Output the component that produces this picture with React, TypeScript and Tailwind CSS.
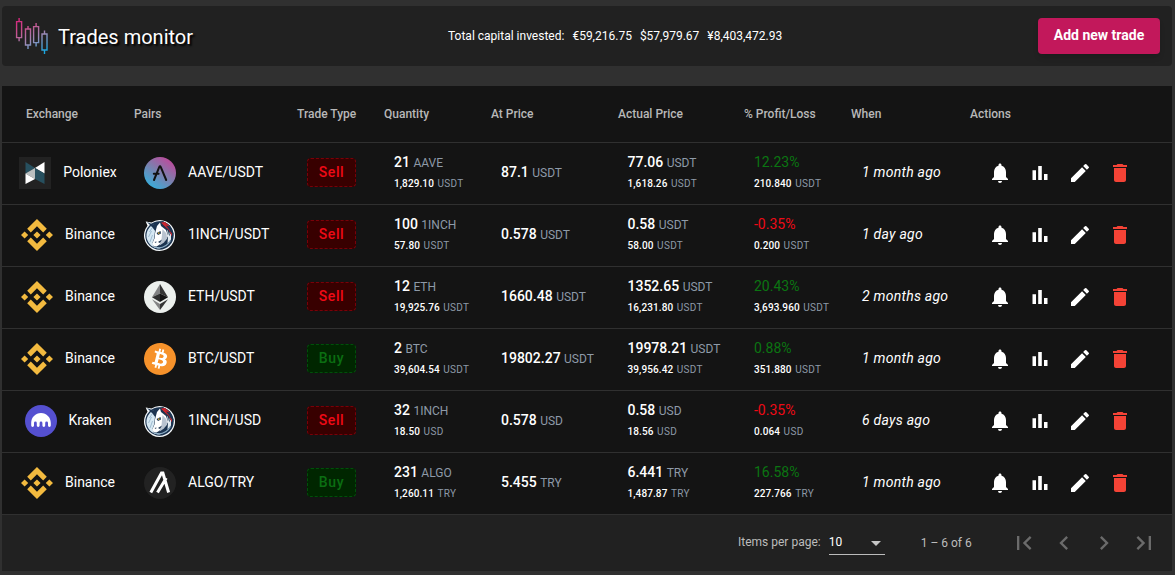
import React from "react";
import { MdNotifications, MdEdit, MdDelete, MdFirstPage, MdLastPage, MdChevronLeft, MdChevronRight } from "react-icons/md";
import { SiBinance, SiBitcoin } from "react-icons/si";

type Exchange = "Poloniex" | "Binance" | "Kraken";
type Coin = "AAVE" | "1INCH" | "ETH" | "BTC" | "ALGO";

interface Trade {
  exchange: Exchange;
  coin: Coin;
  quote: string;
  type: "Sell" | "Buy";
  qty: string;
  total: string;
  at: string;
  actual: string;
  actualTotal: string;
  pct: string;
  profit: string;
  when: string;
}

const trades: Trade[] = [
  { exchange: "Poloniex", coin: "AAVE", quote: "USDT", type: "Sell", qty: "21", total: "1,829.10", at: "87.1", actual: "77.06", actualTotal: "1,618.26", pct: "12.23%", profit: "210.840", when: "1 month ago" },
  { exchange: "Binance", coin: "1INCH", quote: "USDT", type: "Sell", qty: "100", total: "57.80", at: "0.578", actual: "0.58", actualTotal: "58.00", pct: "-0.35%", profit: "0.200", when: "1 day ago" },
  { exchange: "Binance", coin: "ETH", quote: "USDT", type: "Sell", qty: "12", total: "19,925.76", at: "1660.48", actual: "1352.65", actualTotal: "16,231.80", pct: "20.43%", profit: "3,693.960", when: "2 months ago" },
  { exchange: "Binance", coin: "BTC", quote: "USDT", type: "Buy", qty: "2", total: "39,604.54", at: "19802.27", actual: "19978.21", actualTotal: "39,956.42", pct: "0.88%", profit: "351.880", when: "1 month ago" },
  { exchange: "Kraken", coin: "1INCH", quote: "USD", type: "Sell", qty: "32", total: "18.50", at: "0.578", actual: "0.58", actualTotal: "18.56", pct: "-0.35%", profit: "0.064", when: "6 days ago" },
  { exchange: "Binance", coin: "ALGO", quote: "TRY", type: "Buy", qty: "231", total: "1,260.11", at: "5.455", actual: "6.441", actualTotal: "1,487.87", pct: "16.58%", profit: "227.766", when: "1 month ago" },
];

function CandlesLogo() {
  return (
    <svg width="34" height="38" viewBox="0 0 34 38" fill="none" stroke="url(#candles)" strokeWidth="1.4">
      <defs>
        <linearGradient id="candles" gradientUnits="userSpaceOnUse" x1="4" y1="2" x2="24" y2="38">
          <stop offset="0" stopColor="#d7267e" />
          <stop offset="0.3" stopColor="#c4558f" />
          <stop offset="0.62" stopColor="#9a8db8" />
          <stop offset="1" stopColor="#1aa7e0" />
        </linearGradient>
      </defs>
      <path d="M1.600 4.600h5v16h-5zM10.500 12h5v16h-5zM18.600 9.600h5v16h-5zM27 17h5v16h-5z" />
      <path d="M4.100 1v3.600M4.100 20.600v3.600M13 9v3M13 28v4M21.100 6v3.600M21.100 25.600v4M29.500 13.500v3.500M29.500 33v4" />
    </svg>
  );
}

function PoloniexLogo() {
  return (
    <svg width="32" height="32" viewBox="0 0 32 32">
      <path fill="#222222" d="M0 0h32v32H0z" />
      <path fill="#27505f" d="M6.500 5 16 11 6.500 16.500z" />
      <path fill="#fff" d="M25.500 5 16 11l9.500 5.500z" />
      <path fill="#b9bfc0" d="M16 11v11l-9.500-5.500z" />
      <path fill="#27505f" d="M16 11 25.500 16.500V27L16 22z" />
      <path fill="#fff" d="M6.500 16.500 16 22l-9.500 5z" />
    </svg>
  );
}

function KrakenLogo() {
  return (
    <svg width="32" height="32" viewBox="0 0 32 32">
      <circle cx="16" cy="16" r="16" fill="#5550d0" />
      <path fill="#fff" d="M16 8c-5.500 0-9.800 4.400-9.800 9.900v2.700a1.400 1.400 0 0 0 2.800 0v-2.700a1.400 1.400 0 0 1 2.800 0v2.700a1.400 1.400 0 0 0 2.800 0v-2.700a1.400 1.400 0 0 1 2.800 0v2.700a1.400 1.400 0 0 0 2.800 0v-2.700a1.400 1.400 0 0 1 2.800 0v2.700a1.400 1.400 0 0 0 2.800 0v-2.700C25.800 12.400 21.500 8 16 8z" />
    </svg>
  );
}

function AaveLogo() {
  return (
    <svg width="32" height="32" viewBox="0 0 32 32">
      <defs>
        <linearGradient id="aave" x1="0.78" y1="0.12" x2="0.22" y2="0.88">
          <stop offset="0" stopColor="#b6509e" />
          <stop offset="0.5" stopColor="#7b80ae" />
          <stop offset="1" stopColor="#3fa9d6" />
        </linearGradient>
      </defs>
      <circle cx="16" cy="16" r="16" fill="url(#aave)" />
      <path d="M10 23 15.200 10.200Q16 8.500 16.800 10.200L22.200 23M9.800 16.800h4.800" fill="none" stroke="#121212" strokeWidth="2" strokeLinecap="round" />
    </svg>
  );
}

function OneInchLogo() {
  return (
    <svg width="32" height="32" viewBox="0 0 32 32">
      <path fill="#f4f8fa" d="M15.500 1a15.500 15.500 0 1 1-12 5.700L1.700 2.600 7.500 3.500A15.500 15.500 0 0 1 15.500 1z" />
      <circle cx="15.500" cy="16.500" r="14.200" fill="#1c3450" />
      <path fill="#d6e8f3" d="M9 5.500C3 9 1 16 3.500 21.500 6 27.500 11.500 30 17 29.500c-5-1.500-7.500-4.500-7-9.500l1-8 3-5z" />
      <path d="m5.500 13 2.500-4M4.500 18l3-6M6 23l2.500-7" stroke="#8fb0c8" strokeWidth="0.800" />
      <path fill="#1c3450" d="m3 3 6 2.500L14 3l5-1 7 4.500 3.500 8-1 5-6 8-6 1-7-1-1-4 2-5 1-6-3-4z" />
      <path fill="#fff" d="m13 7 3-3.500 1 3.500 5 4 2 6-2 4-4 2-3 3-2.500 1.500-3-.5-1.200-2.500 2.200-5 .5-5z" />
      <path fill="#b9c3d0" d="m18.500 10 4 4.500.5 4.500-3 4.500-4.500 3 2-6z" />
      <path fill="#e4ecf3" d="m23 10.500 4 5v5l-3.500 4 .500-7z" />
      <path fill="#c9242c" d="m17 3.500 4-.5 5 4.500-4-1 4.500 5.500-5-3zM24.500 10.500l3.500 4v3z" />
      <path d="m18 5.500 6 5 1.500 6" stroke="#1c3450" strokeWidth="0.900" fill="none" />
      <path d="M10 28c7 2 13-.5 16.500-6.500" stroke="#8fb0c8" strokeWidth="1.100" fill="none" />
      <path fill="#1c3450" d="m12.500 14 4-2 .5 2.500-3 1.500zM10.500 23l2-.5-.5 1.500zM14 23l4-2.500-2 3.500z" />
      <path fill="#e9b931" d="M14 13.500h1.500v1.200H14z" />
    </svg>
  );
}

function EthLogo() {
  return (
    <svg width="32" height="32" viewBox="0 0 32 32">
      <circle cx="16" cy="16" r="16" fill="#ecf0ed" />
      <path fill="#828384" d="M16 3v9.500L8 16.300z" />
      <path fill="#343434" d="M16 3v9.500l8 3.800z" />
      <path fill="#2f3030" d="M16 12.500V21l-8-4.700z" />
      <path fill="#131313" d="M16 12.500V21l8-4.700z" />
      <path fill="#828384" d="M8 18.200 16 23v6z" />
      <path fill="#343434" d="M24 18.200 16 23v6z" />
    </svg>
  );
}

function AlgoLogo() {
  return (
    <svg width="32" height="32" viewBox="0 0 32 32">
      <circle cx="16" cy="16" r="16" fill="#222222" />
      <path d="M6.800 25.500 17.500 6h1.400l5.700 19.500M13.500 25.500l8.700-14.500" fill="none" stroke="#fff" strokeWidth="3" />
    </svg>
  );
}

function ExchangeLogo({ name }: { name: Exchange }) {
  if (name === "Poloniex") return <PoloniexLogo />;
  if (name === "Kraken") return <KrakenLogo />;
  return <SiBinance className="size-8 text-[#f3ba3f]" />;
}

function CoinLogo({ coin }: { coin: Coin }) {
  if (coin === "AAVE") return <AaveLogo />;
  if (coin === "1INCH") return <OneInchLogo />;
  if (coin === "ETH") return <EthLogo />;
  if (coin === "ALGO") return <AlgoLogo />;
  return (
    <span className="flex size-8 items-center justify-center rounded-full bg-[radial-gradient(white_60%,transparent_61%)]">
      <SiBitcoin className="size-8 text-[#f6922b]" />
    </span>
  );
}

function BarChartIcon() {
  return (
    <svg width="24" height="24" viewBox="0 0 24 24" fill="currentColor">
      <path d="M4.500 9.200H8V19H4.500zM10.200 5h3.600v14h-3.600zM16 13h3.500v6H16z" />
    </svg>
  );
}

function Amount({ value, unit }: { value: string; unit: string }) {
  return (
    <div className="text-sm leading-5 font-medium">
      {value} <span className="text-xs font-normal text-[#8e9aa8]">{unit}</span>
    </div>
  );
}

function SmallAmount({ value, unit }: { value: string; unit: string }) {
  return (
    <div className="mt-1 mb-0.5 text-[10px] leading-4 font-medium tracking-[0.1px]">
      {value} <span className="ml-px font-normal tracking-[0.3px] text-[#8e9aa8]">{unit}</span>
    </div>
  );
}

function TradeBadge({ type }: { type: Trade["type"] }) {
  const tone = type === "Sell" ? "border-[#7a0008] bg-[#380000] text-[#f00a16]" : "border-[#00500a] bg-[#002600] text-[#0b6e12]";
  return <div className={"mb-0.5 flex h-[29px] w-[49px] items-center justify-center rounded border border-dashed text-sm font-medium tracking-[0.6px] " + tone}>{type}</div>;
}

const headers = ["Exchange", "Pairs", "Trade Type", "Quantity", "At Price", "Actual Price", "% Profit/Loss", "When", "Actions"];

export default function App() {
  return (
    <div className="h-[575px] w-[1175px] overflow-hidden bg-[#303030] pt-1.5 pr-[3px] pl-0.5 font-[Roboto,sans-serif] text-white">
      <header className="mb-5 flex h-15 items-center rounded bg-[#212121] pr-3 pl-[13px]">
        <CandlesLogo />
        <h1 className="mt-0.5 ml-[9px] w-[390px] text-xl leading-6 [text-shadow:2px_2px_2px_#000]">Trades monitor</h1>
        <div className="flex gap-2 text-xs">
          <span>Total capital invested:</span>
          <span>€59,216.75</span>
          <span>$57,979.67</span>
          <span>¥8,403,472.93</span>
        </div>
        <button className="ml-auto h-9 w-[122px] rounded bg-[#c2185b] pb-0.5 text-sm font-bold shadow-md">Add new trade</button>
      </header>

      <table className="w-full table-fixed border-collapse bg-[#141414]">
        <colgroup>
          <col className="w-[132px]" />
          <col className="w-[163px]" />
          <col className="w-[87px]" />
          <col className="w-[107px]" />
          <col className="w-[127px]" />
          <col className="w-[126px]" />
          <col className="w-[107px]" />
          <col className="w-[119px]" />
          <col />
        </colgroup>
        <thead>
          <tr className="h-14 border-b border-[#303030]">
            {headers.map((h) => (
              <th key={h} className="p-0 text-left text-xs font-medium whitespace-nowrap text-[#b8b8b8] first:pl-6">
                {h}
              </th>
            ))}
          </tr>
        </thead>
        <tbody>
          {trades.map((t, i) => (
            <tr key={i} className="h-[62px] border-b border-[#303030]">
              <td className="p-0">
                <div className="flex items-center justify-center gap-3 text-sm">
                  <ExchangeLogo name={t.exchange} />
                  <span className="-mt-0.5">{t.exchange}</span>
                </div>
              </td>
              <td className="p-0 pl-2.5">
                <div className="flex items-center gap-3 text-sm">
                  <CoinLogo coin={t.coin} />
                  <span className="-mt-0.5">{t.coin}/{t.quote}</span>
                </div>
              </td>
              <td className="p-0 pl-2.5"><TradeBadge type={t.type} /></td>
              <td className="p-0 pl-2.5">
                <Amount value={t.qty} unit={t.coin} />
                <SmallAmount value={t.total} unit={t.quote} />
              </td>
              <td className="p-0 pb-0.5 pl-2.5"><Amount value={t.at} unit={t.quote} /></td>
              <td className="p-0 pl-[9.5px]">
                <Amount value={t.actual} unit={t.quote} />
                <SmallAmount value={t.actualTotal} unit={t.quote} />
              </td>
              <td className="p-0 pl-2.5">
                <div className={t.pct.startsWith("-") ? "text-sm leading-5 text-[#f00a16]" : "text-sm leading-5 text-[#0b7512]"}>{t.pct}</div>
                <SmallAmount value={t.profit} unit={t.quote} />
              </td>
              <td className="p-0 pb-[3px] pl-[11px] text-sm tracking-[0.25px] italic">{t.when}</td>
              <td className="p-0 pl-[18px]">
                <div className="flex gap-4 text-2xl">
                  <MdNotifications />
                  <BarChartIcon />
                  <MdEdit />
                  <MdDelete className="text-[#f44336]" />
                </div>
              </td>
            </tr>
          ))}
        </tbody>
      </table>

      <footer className="flex h-14 items-center bg-[#212121] pl-[736px] text-xs text-[#bcbcbc]">
        <span className="pb-0.5">Items per page:</span>
        <div className="ml-2 flex h-6 w-14 items-center border-b border-[#bcbcbc] text-white">
          <span className="flex-1">10</span>
          <span className="mt-0.5 mr-1 border-x-5 border-t-5 border-x-transparent border-t-[#c6c6c6]" />
        </div>
        <span className="ml-9 w-[89px]">1 – 6 of 6</span>
        <div className="flex gap-3 text-[28px] text-[#6b6b6b]">
          <MdFirstPage />
          <MdChevronLeft />
          <MdChevronRight />
          <MdLastPage />
        </div>
      </footer>
    </div>
  );
}
